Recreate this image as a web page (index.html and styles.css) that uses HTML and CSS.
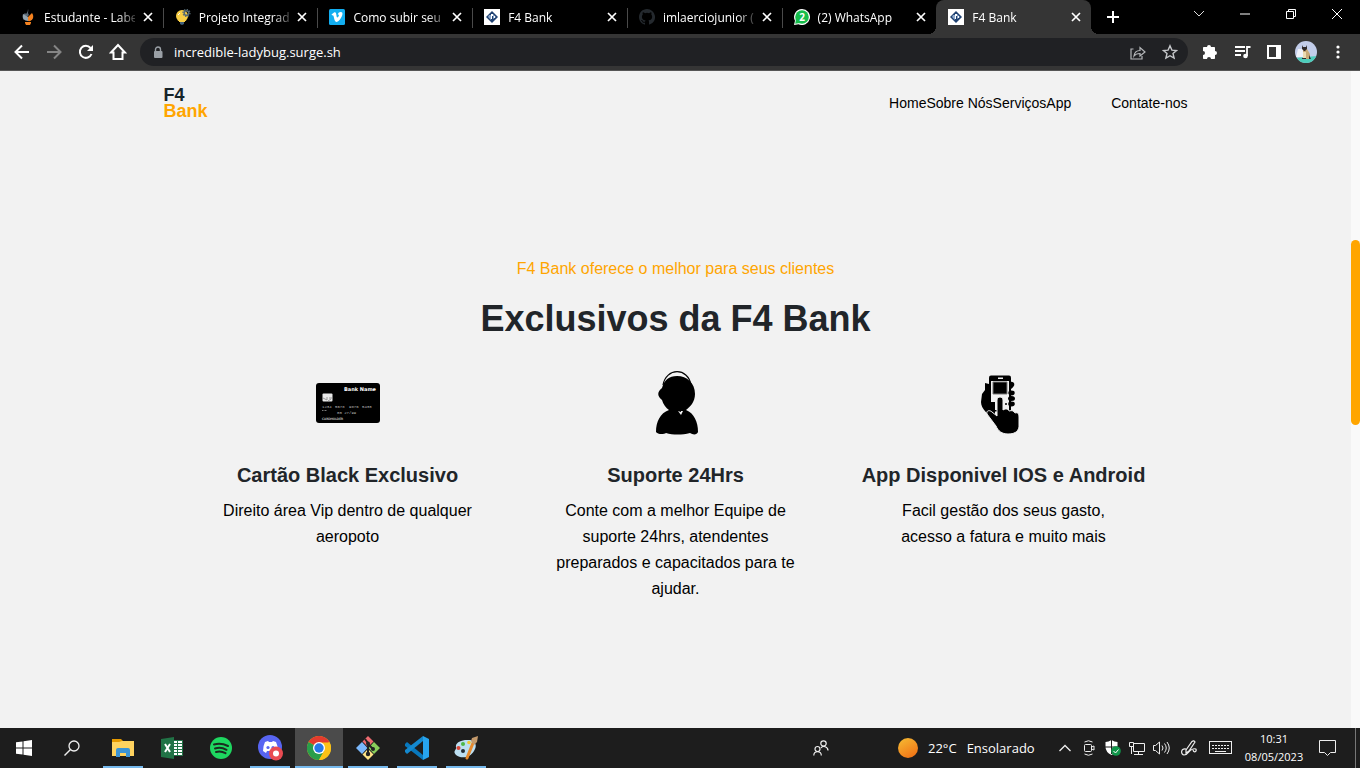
FILE: index.html
```html
<!DOCTYPE html>
<html lang="pt-BR">
<head>
<meta charset="utf-8">
<meta name="viewport" content="width=device-width, initial-scale=1">
<title>F4 Bank</title>
<link rel="stylesheet" href="styles.css">
</head>
<body>
<svg class="sprite" aria-hidden="true">
  <symbol id="x" viewBox="0 0 10 10"><path d="M1 1l8 8M9 1l-8 8" stroke="currentColor" stroke-width="1.7" fill="none"/></symbol>
  <symbol id="f4" viewBox="0 0 16 16"><path fill="#fff" d="M0 0h16v16H0z"/><path fill="#1f4171" d="M8 2l6 6-6 6-6-6z"/><path fill="#8da8ca" d="M5 6h2v5l-3-3zM9 5l3 3-3 2z"/><path fill="#fff" d="M7 5h2v2H8v3H7zM10 7h1v2h-1z"/></symbol>
</svg>

<div class="tabstrip">
  <div class="tabs">
    <div class="tab">
      <svg class="favicon" viewBox="0 0 16 16"><path fill="#5d6b78" d="M8 0c1 3-1 3 1 6L4 11C1 8 4 5 5 4l1 1C7 4 8 2 8 0z"/><path fill="#94a3ae" d="M3 5l5 3v4c-4 0-6-3-5-7z"/><path fill="#f5821f" d="M12 4c3 4 0 9-4 8V8z"/><path fill="#f5821f" d="M5 13h6v1l-1 2H6l-1-2z"/></svg>
      <a class="title" href="#">Estudante - Labenu</a><button class="close" aria-label="Fechar"><svg><use href="#x"/></svg></button>
    </div>
    <div class="tab">
      <svg class="favicon" viewBox="0 0 16 16"><circle cx="7" cy="7" r="6" fill="#f8ce45"/><path fill="#f8ce45" d="M4 11h6v2H4z"/><path fill="#43617b" d="M5 13h4v2l-2 1-2-1z"/><circle cx="11.500" cy="4" r="2.300" fill="none" stroke="#566b75" stroke-width="1.600"/><circle cx="11.500" cy="4" r="3.500" fill="none" stroke="#566b75" stroke-width="1.200" stroke-dasharray="1.400 1.300"/><path d="M3 6l2-2" stroke="#fff"/></svg>
      <a class="title" href="#">Projeto Integrador</a><button class="close" aria-label="Fechar"><svg><use href="#x"/></svg></button>
    </div>
    <div class="tab">
      <svg class="favicon" viewBox="0 0 16 16"><rect width="16" height="16" rx="1.5" fill="#12aef0"/><path fill="#fff" d="M2.500 5.600L5 3.600c1.500-.8 2 .2 2.300 2 .3 1.700.5 3 1 3 .6 0 1.600-1.700 1.600-2.400 0-.8-.6-.8-1.200-.6.6-2 1.800-2.700 3.200-2.600 1.400.1 1.800 1.200 1.500 2.500C12.800 8.500 9.500 13 7.500 13c-1.700 0-2-2-2.600-4.400C4.500 6.900 4.300 6 3.200 6.500z"/></svg>
      <a class="title" href="#">Como subir seu site</a><button class="close" aria-label="Fechar"><svg><use href="#x"/></svg></button>
    </div>
    <div class="tab">
      <svg class="favicon"><use href="#f4"/></svg>
      <a class="title" href="#">F4 Bank</a><button class="close" aria-label="Fechar"><svg><use href="#x"/></svg></button>
    </div>
    <div class="tab">
      <svg class="favicon" viewBox="0 0 16 16"><path fill="#24292e" d="M8 0C3.580 0 0 3.580 0 8c0 3.540 2.290 6.530 5.470 7.590.4.070.55-.17.55-.38v-1.490c-2.010.37-2.530-.49-2.690-.94-.09-.23-.48-.94-.82-1.130-.28-.15-.68-.52-.01-.53.63-.01 1.080.58 1.230.82.72 1.210 1.870.87 2.330.66.07-.52.28-.87.510-1.070-1.780-.2-3.640-.89-3.640-3.950 0-.87.31-1.590.82-2.150-.08-.2-.36-1.020.08-2.120 0 0 .67-.21 2.200.82a7.600 7.600 0 014 0c1.530-1.040 2.200-.82 2.200-.82.44 1.100.16 1.920.08 2.120.510.56.82 1.270.82 2.150 0 3.070-1.870 3.750-3.650 3.950.29.25.54.73.54 1.480v2.200c0 .21.15.46.55.38A8 8 0 008 0z"/></svg>
      <a class="title" href="#">imlaerciojunior (Laercio)</a><button class="close" aria-label="Fechar"><svg><use href="#x"/></svg></button>
    </div>
    <div class="tab">
      <svg class="favicon" viewBox="0 0 16 16"><path fill="#fff" d="M8 0a8 8 0 11-3.500 15.200L0 16l1-4.200A8 8 0 018 0z"/><circle cx="8" cy="8" r="6.800" fill="#16bd4b"/><path fill="#16bd4b" d="M2 10l-.8 4.800L6 14z"/><text x="8" y="12" text-anchor="middle" class="count">2</text></svg>
      <a class="title" href="#">(2) WhatsApp</a><button class="close" aria-label="Fechar"><svg><use href="#x"/></svg></button>
    </div>
    <div class="tab active">
      <svg class="favicon"><use href="#f4"/></svg>
      <a class="title" href="#" aria-current="page">F4 Bank</a><button class="close" aria-label="Fechar"><svg><use href="#x"/></svg></button>
    </div>
  </div>
  <button class="new-tab" aria-label="Nova guia"><svg width="12" height="12"><path d="M6 0v12M0 6h12" stroke="#fff" stroke-width="2"/></svg></button>
  <div class="window-buttons">
    <button aria-label="Pesquisar guias"><svg width="12" height="8"><path d="M1 1l5 5 5-5" stroke="#ddd" fill="none"/></svg></button>
    <button aria-label="Minimizar"><svg width="10" height="2"><path d="M0 1h10" stroke="#fff"/></svg></button>
    <button aria-label="Restaurar"><svg width="10" height="10"><path d="M.5 2.500h7v7h-7zM2.500 2.500v-2h7v7h-2" stroke="#fff" fill="none"/></svg></button>
    <button aria-label="Fechar janela"><svg width="10" height="10"><path d="M0 0l10 10M10 0L0 10" stroke="#fff"/></svg></button>
  </div>
</div>

<div class="toolbar">
  <button class="tool" aria-label="Voltar"><svg width="16" height="16"><path d="M15 8H2M8 1.500L1.500 8 8 14.500" stroke="#fff" stroke-width="2" fill="none"/></svg></button>
  <button class="tool" aria-label="Avançar"><svg width="16" height="16"><path d="M1 8h13M8 1.500L14.500 8 8 14.500" stroke="#858585" stroke-width="2" fill="none"/></svg></button>
  <button class="tool" aria-label="Recarregar"><svg width="16" height="16"><path d="M13.500 10A6 6 0 1 1 12.500 4" stroke="#fff" stroke-width="2" fill="none"/><path d="M15 1v6H9z" fill="#fff"/></svg></button>
  <button class="tool" aria-label="Início"><svg width="18" height="18"><path d="M2 9.500L9 2l7 7.500h-2.500V16h-9V9.500z" stroke="#fff" stroke-width="2" fill="none"/></svg></button>
  <div class="omnibox">
    <svg width="10" height="13"><path d="M2.500 6V3.500a2.500 2.500 0 015 0V6" stroke="#9aa0a6" stroke-width="1.400" fill="none"/><rect x="1" y="5" width="8.500" height="7" rx="1" fill="#9aa0a6"/></svg>
    <input type="text" aria-label="Endereço" value="incredible-ladybug.surge.sh">
    <button class="tool" aria-label="Compartilhar"><svg width="16" height="15"><path d="M3.500 4H1v10h11v-3M4 11c.5-4 3-5.500 6-5.500V2.500L15 7l-5 4V8.500C7.500 8.500 5.500 9 4 11z" stroke="#b5b7ba" stroke-width="1.200" fill="none"/></svg></button>
    <button class="tool" aria-label="Favoritar"><svg width="16" height="16"><path d="M8 1.800l1.900 4.300 4.600.4-3.500 3 1.100 4.600L8 11.700l-4.100 2.400L5 9.500l-3.500-3 4.600-.4z" stroke="#c5c7ca" stroke-width="1.400" fill="none"/></svg></button>
  </div>
  <button class="tool" aria-label="Extensões"><svg width="16" height="16"><path fill="#fff" d="M5 3a2 2 0 014 0h3c.6 0 1 .4 1 1v3a2 2 0 010 4v3c0 .6-.4 1-1 1H9a2 2 0 00-4 0H2c-.6 0-1-.4-1-1v-3a2 2 0 000-4V4c0-.6.4-1 1-1z"/></svg></button>
  <button class="tool" aria-label="Mídia"><svg width="17" height="14"><path d="M1 2h10M1 6h10M1 10h6M13 11V2h3.500" stroke="#fff" stroke-width="1.800" fill="none"/><circle cx="11.500" cy="11" r="2.300" fill="#fff"/></svg></button>
  <button class="tool" aria-label="Painel lateral"><svg width="14" height="14"><path fill="#fff" fill-rule="evenodd" d="M0 0h14v14H0zM2 2v10h7V2z"/></svg></button>
  <button class="tool" aria-label="Perfil"><svg width="22" height="22"><clipPath id="av"><circle cx="11" cy="11" r="11"/></clipPath><g clip-path="url(#av)"><path fill="#c2cdea" d="M0 0h22v22H0z"/><path fill="#eef1fa" d="M3 8h5v8H1z"/><path fill="#4dcdbb" d="M0 17l22-2v7H0z"/><path fill="#c7aa78" d="M8 8h4l3 5v5H8z"/><path fill="#eadab2" d="M8 11h3v6H8z"/><path fill="#302b2c" d="M7 4l1 2h3l1-2v4l-2 2H9L7 8zM7 17h4v1H7zM14 14l2 4h-2z"/></g></svg></button>
  <button class="tool" aria-label="Menu"><svg width="4" height="14"><circle cx="2" cy="2" r="1.600" fill="#fff"/><circle cx="2" cy="7" r="1.600" fill="#fff"/><circle cx="2" cy="12" r="1.600" fill="#fff"/></svg></button>
</div>

<div class="viewport">
  <div class="page">
    <header class="container header">
      <a class="logo" href="#">F4<span>Bank</span></a>
      <nav><a href="#">Home</a><a href="#">Sobre Nós</a><a href="#">Serviços</a><a href="#">App</a><a class="contact" href="#">Contate-nos</a></nav>
    </header>
    <main class="container exclusives">
      <p class="subtitle">F4 Bank oferece o melhor para seus clientes</p>
      <h2>Exclusivos da F4 Bank</h2>
      <div class="cards">
        <article>
          <svg width="64" height="64" role="img" aria-label="Cartão"><rect y="12" width="64" height="40" rx="3"/><text x="60" y="20" text-anchor="end" class="card-bank">Bank Name</text><rect x="6.500" y="22.500" width="10" height="8" rx="1" fill="#e9e9e9"/><path d="M7 27l4 2v-3M13 27h3M12 30l3-2" stroke="#999" fill="none"/><g class="card-print"><text x="6" y="37">1234</text><text x="19" y="37">5678</text><text x="33" y="37">9876</text><text x="46" y="37">5430</text><text x="21" y="43">00 27/99</text></g><path d="M6 39.500h5" stroke="#777" stroke-dasharray="1 .5"/><text x="6" y="49" class="card-holder">CARDHOLDER</text></svg>
          <h3>Cartão Black Exclusivo</h3>
          <p>Direito área Vip dentro de qualquer aeropoto</p>
        </article>
        <article>
          <svg width="64" height="64" viewBox="-3 0 64 64" role="img" aria-label="Atendente"><path d="M16 14C19-3.500 41-4 44 14" stroke="#000" stroke-width="1.200" fill="none"/><path d="M30 5C40 5 48 12 48 23c0 8-5 13-9 16 8 3 12 12 12 22-1 3-5 3-8 1-8 2-17 2-24 0-3 2-9 1-10-1 0-10 4-19 13-22-3-2-6-6-7-10-5-4-5-8 0-12C17 9 22 5 30 5z"/><path fill="#f2f2f2" d="M31 40l3 1v-1h2l-2 4z"/></svg>
          <h3>Suporte 24Hrs</h3>
          <p>Conte com a melhor Equipe de suporte 24hrs, atendentes preparados e capacitados para te ajudar.</p>
        </article>
        <article>
          <svg width="64" height="64" viewBox="2 0 64 64" role="img" aria-label="Celular na mão"><path d="M15 12l4 1v17l6 3v14c-7-3-14-9-14-16l1-8 3-4z"/><rect x="19" y="4.500" width="22" height="36" rx="2"/><path fill="#f2f2f2" d="M21 10h18v29H21z"/><path d="M23 11h14v12H23z" stroke="#777"/><path fill="#f2f2f2" d="M28 6.500h5v1.500h-5z"/><path d="M40 11c5-1 6 4 1 7z"/><ellipse cx="41.500" cy="22" rx="3.200" ry="2.400"/><ellipse cx="41.500" cy="27.500" rx="3.500" ry="2.500"/><ellipse cx="41.500" cy="33" rx="3.300" ry="2.400"/><circle cx="36" cy="33" r="1"/><path d="M21 31h4v9h-4z"/><path stroke="#f2f2f2" stroke-width="1" d="M27 45V29c0-4 6-4 6 0v10c3-2 5-1 6 1 3-1 5 0 6 2 3-1 4 1 4 4v10c-1 5-5 7-11 7-6 0-10-3-12-8l-9-12c-1-4 3-4 5-2z"/></svg>
          <h3>App Disponivel IOS e Android</h3>
          <p>Facil gestão dos seus gasto, acesso a fatura e muito mais</p>
        </article>
      </div>
    </main>
  </div>
  <div class="scrollbar"><div class="thumb"></div></div>
</div>

<footer class="taskbar">
  <button class="sys" aria-label="Iniciar"><svg width="16" height="16"><path fill="#fff" d="M0 2.300l6.500-.9v6.100H0zM7.500 1.200L16 0v7.500H7.500zM0 8.500h6.500v6.100L0 13.700zM7.500 8.500H16V16l-8.500-1.200z"/></svg></button>
  <button class="sys" aria-label="Pesquisar"><svg width="16" height="16"><circle cx="10" cy="6" r="5" stroke="#eee" stroke-width="1.300" fill="none"/><path d="M6.500 9.500L.5 15.500" stroke="#eee" stroke-width="1.400"/></svg></button>
  <div class="apps">
    <button class="app open" aria-label="Explorador"><svg width="22" height="20"><path fill="#e69a00" d="M0 1h9l2 2v4H0z"/><path fill="#ffd35f" d="M0 4h7l3-1h12v15H0z"/><path fill="#3c94d5" d="M4 19v-7q0-2 2-2h10q2 0 2 2v7h-4v-4H8v4z"/></svg></button>
    <button class="app" aria-label="Excel"><svg width="22" height="22"><path fill="#fff" stroke="#217346" d="M12 3.500h9.500v15H12z"/><path stroke="#217346" d="M12 6.500h9M12 9.500h9M12 12.500h9M12 15.500h9M16.500 4v14"/><path fill="#217346" d="M0 2l13-2v22L0 20z"/><path d="M4 7l5 8M9 7l-5 8" stroke="#fff" stroke-width="2"/></svg></button>
    <button class="app" aria-label="Spotify"><svg width="22" height="22"><circle cx="11" cy="11" r="11" fill="#1ed760"/><path d="M4 7.500q7-2 14 1.500M5 11.500q6-1.800 11.500 1.300M6 15q5-1.300 9.500 1.200" stroke="#1b2b20" stroke-width="2" stroke-linecap="round" fill="none"/></svg></button>
    <button class="app open" aria-label="Discord"><svg width="26" height="26"><circle cx="13" cy="12" r="12" fill="#5865f2"/><path fill="#fff" d="M8 7l3-1 1 1h3l1-1 3 1q2 4 2 9l-3 2-1-2h-7l-1 2-3-2Q6 11 8 7z"/><circle cx="11" cy="12.500" r="1.600" fill="#5865f2"/><circle cx="16" cy="12.500" r="1.600" fill="#5865f2"/><circle cx="19" cy="18.500" r="7" fill="#e94b52"/><circle cx="19" cy="18.500" r="3" fill="#fff"/></svg></button>
    <button class="app open current" aria-label="Chrome"><svg width="24" height="24"><circle cx="12" cy="12" r="12" fill="#fbc116"/><path fill="#e33b2e" d="M12 12L1.600 6A12 12 0 0122.400 6z"/><path fill="#299e4b" d="M12 12L1.600 6A12 12 0 0012 24l5.200-9z"/><path fill="#fbc116" d="M12 6.500h10.700A12 12 0 0112 24l5-9z"/><circle cx="12" cy="12" r="6" fill="#fff"/><circle cx="12" cy="12" r="4.700" fill="#2678e8"/></svg></button>
    <button class="app open" aria-label="Git Bash"><svg width="24" height="24"><path fill="#ef6b70" d="M12 0l5.500 5.500L12 11 6.500 5.500z"/><path fill="#7bb8fb" d="M6 6l5.500 6L6 18 0 12z"/><path fill="#8ace5b" d="M18 6l6 6-6 6-5.500-6z"/><path fill="#ffe486" d="M12 13l5.500 5.500L12 24l-5.500-5.500z"/><path d="M9 3l3 4v11M12 8l5 5" stroke="#222" stroke-width="2" fill="none"/><circle cx="12" cy="7.500" r="2" fill="#222"/><circle cx="12" cy="18" r="2.200" fill="#222"/><circle cx="17" cy="13" r="2" fill="#222"/></svg></button>
    <button class="app open" aria-label="VS Code"><svg width="24" height="24"><path fill="#0878bd" d="M0 8l2-2 16 13v5L0 10z"/><path fill="#1489cf" d="M0 16l2 2L18 5V0L0 14z"/><path fill="#27a4ee" d="M18 0l6 3v18l-6 3z"/></svg></button>
    <button class="app open" aria-label="Paint"><svg width="24" height="24"><path fill="#bcdff2" d="M13 4c8-1 11 5 7 11-4 7-13 8-18 4-4-4 1-5 0-8C1 7 7 4 13 4z"/><circle cx="9" cy="8" r="2" fill="#4db848"/><circle cx="15" cy="6.500" r="1.800" fill="#f0c834"/><circle cx="4.500" cy="12" r="2" fill="#d84536"/><circle cx="9" cy="15" r="2" fill="#222c35"/><path d="M19 7l-6 15" stroke="#e78a2d" stroke-width="3" stroke-linecap="round"/><path fill="#c49a6c" d="M17 5l1-3 6-2-1 6-3 3z"/></svg></button>
  </div>
  <div class="tray">
    <button class="wide" aria-label="Contatos"><svg width="16" height="16" fill="none" stroke="#eee" stroke-width="1.200"><circle cx="10.500" cy="3.500" r="2.700"/><circle cx="4.500" cy="9" r="2.500"/><path d="M.8 15.500c0-5 7.500-5 7.500 0M8 8c2-3 7-1 7 2.500"/></svg></button>
    <button class="weather"><span class="sun"></span><span>22°C</span><span>Ensolarado</span></button>
    <button aria-label="Ícones ocultos"><svg width="12" height="8"><path d="M.5 7L6 1.500 11.500 7" stroke="#eee" stroke-width="1.300" fill="none"/></svg></button>
    <button aria-label="Câmera"><svg width="12" height="16" fill="none" stroke="#eee"><rect x="1.500" y="4.500" width="7" height="7" rx="1"/><path d="M8.500 7l2.500-1v4L8.500 9M1.500 2q4-2.500 8 0M1.500 14q4 2.500 8 0"/></svg></button>
    <button aria-label="Segurança"><svg width="16" height="16"><path fill="#fff" d="M6.500 0q3 2 6 2v5q0 5-6 8-6-3-6-8V2q3 0 6-2z"/><path d="M6.500 0v14M0 7h13" stroke="#1d1d1d"/><circle cx="11" cy="11" r="4.800" fill="#10964a"/><path d="M8.500 11l2 2 3-3.500" stroke="#fff" fill="none"/></svg></button>
    <button aria-label="Rede"><svg width="16" height="15" fill="none" stroke="#eee"><path d="M5 2.500h10.500v8h-11V5M9.500 10.500v3M5 13.500h9M.5 1.500h4v4h-4zM2.500 6v7"/></svg></button>
    <button aria-label="Volume"><svg width="17" height="14" fill="none" stroke="#eee"><path d="M.5 4.500h2l4-3.500v12l-4-3.500h-2zM9 4.500q2 2.500 0 5M11.500 2.500q3.500 4.500 0 9M14 1q4.500 6 0 12"/></svg></button>
    <button class="wide" aria-label="Caneta"><svg width="17" height="16" fill="none" stroke="#eee" stroke-width="1.200"><path d="M5 10L11 1.500q2-1.500 3 .5L8 11l-3 2zM5 9C-1 8 0 15 3 15c5 0 4-5 9-6q4-1 3 2-2 2-3-1"/></svg></button>
    <button class="wide" aria-label="Teclado"><svg width="24" height="14"><rect x=".5" y=".5" width="22" height="12" fill="none" stroke="#eee"/><path d="M3 4.500h18M3 7.500h18" stroke="#eee" stroke-dasharray="2 1"/><path d="M6 10.500h11" stroke="#eee"/></svg></button>
    <button class="clock"><time>10:31</time><time>08/05/2023</time></button>
    <button class="wide" aria-label="Notificações"><svg width="17" height="16"><path d="M.5.5h16v12h-5l-3 3-3-3h-5z" stroke="#eee" fill="none"/></svg></button>
    <span class="desktop-edge"></span>
  </div>
</footer>
</body>
</html>
```
FILE: styles.css
```css
* { box-sizing: border-box; margin: 0; padding: 0; }
body { display: flex; flex-direction: column; height: 100vh; overflow: hidden; font-family: "Liberation Sans", Arial, sans-serif; background: #f2f2f2; }
a { color: inherit; text-decoration: none; }
button { display: flex; align-items: center; justify-content: center; flex: none; border: 0; background: none; color: #fff; font: inherit; }
svg { flex: none; }
.sprite { position: absolute; width: 0; height: 0; }

/* Browser chrome */
.tabstrip, .toolbar, .taskbar { display: flex; flex: none; font-family: "Open Sans", "Noto Sans", sans-serif; color: #fff; }
.tabstrip { height: 34px; background: #000; }
.tabs { display: flex; width: 1083px; min-width: 0; margin-left: 8px; }
.tab { position: relative; display: flex; flex: 1; align-items: center; min-width: 0; padding: 0 10px 0 12px; font-size: 12px; }
.tab::after { content: ""; position: absolute; right: -1px; top: 8px; width: 1px; height: 20px; background: #4a4a4a; }
.tab:nth-last-child(2)::after { display: none; }
.favicon { width: 16px; height: 16px; margin-right: 8px; }
.count { font: bold 10px "Open Sans", sans-serif; fill: #fff; }
.title { flex: 1; overflow: hidden; white-space: nowrap; mask-image: linear-gradient(to right, #000 74px, transparent 96px); }
.tab .close { width: 10px; height: 10px; margin-left: 8px; }
.close svg { width: 10px; height: 10px; }
.tab.active { border-radius: 8px 8px 0 0; background: #353535; }
.tab.active::before, .tab.active::after { content: ""; position: absolute; top: auto; bottom: 0; width: 8px; height: 8px; }
.tab.active::before { left: -8px; background: radial-gradient(circle at 0 0, transparent 8px, #353535 8px); }
.tab.active::after { right: -8px; background: radial-gradient(circle at 100% 0, transparent 8px, #353535 8px); }
.new-tab { width: 28px; margin-left: 8px; }
.window-buttons { display: flex; height: 28px; margin-left: auto; }
.window-buttons button { width: 46px; }
.toolbar { align-items: center; height: 37px; padding: 0 6px; background: #353535; border-bottom: 1px solid #565656; }
.tool { width: 32px; height: 28px; }
.omnibox { display: flex; flex: 1; align-items: center; height: 28px; margin: 0 6px; padding: 0 2px 0 13px; border-radius: 14px; background: #202124; }
.omnibox input { flex: 1; min-width: 0; margin-left: 11px; border: 0; outline: 0; background: none; color: #fff; font: 13px "Open Sans", "Noto Sans", sans-serif; }

/* Site */
.viewport { display: flex; flex: 1; min-height: 0; }
.page { flex: 1; min-width: 0; overflow: hidden; background: #f2f2f2; }
.scrollbar { width: 9px; padding-top: 169px; background: #f9f9f9; }
.thumb { height: 185px; border-radius: 5px; background: #ffa500; }
.container { width: 100%; max-width: 1024px; margin: 0 auto; }
.header { display: flex; align-items: center; justify-content: space-between; height: 64px; }
.logo { font-size: 18px; line-height: 16px; font-weight: bold; color: #16242a; }
.logo span { display: block; color: #ffa500; }
nav { display: flex; font-size: 14px; color: #000; }
.contact { margin-left: 40px; }
.exclusives { padding: 121px 40px 0; text-align: center; line-height: 26px; color: #000; }
.subtitle { color: #ffa500; }
h2 { margin-top: 15px; font-size: 36px; line-height: 44px; color: #212529; }
.cards { display: grid; grid-template-columns: repeat(3, 1fr); gap: 40px; margin-top: 30px; }
article svg { display: block; margin: 0 auto 27px; }
article h3 { margin-bottom: 10px; font-size: 20px; color: #212529; }
article p { max-width: 252px; margin: 0 auto; }
.card-bank { font: bold 5px "DejaVu Sans", sans-serif; fill: #fff; }
.card-print { font: 4px "Liberation Mono", monospace; fill: #bbb; }
.card-holder { font: 3px "DejaVu Sans", sans-serif; fill: #fff; }

/* Taskbar */
.taskbar { height: 40px; background: #1d1d1d; }
.sys { width: 48px; }
.apps { display: flex; gap: 1px; margin-left: 3px; }
.app { position: relative; width: 48px; }
.app.open::after { content: ""; position: absolute; bottom: 0; left: 4px; right: 4px; height: 2px; background: #76b9ed; }
.app.current { background: #4b4b4b; }
.app.current::after { left: 0; right: 0; }
.tray { display: flex; margin-left: auto; }
.tray button { width: 24px; }
.tray .wide { width: 32px; }
.tray .weather { justify-content: flex-start; gap: 10px; width: 155px; margin-left: 61px; font-size: 13px; white-space: nowrap; }
.sun { width: 20px; height: 20px; border-radius: 50%; background: linear-gradient(150deg, #f5bd34, #f06a12); }
.tray .clock { flex-direction: column; width: 74px; font-size: 11px; line-height: 18px; }
.desktop-edge { width: 5px; margin-left: 12px; border-left: 1px solid #777; }
```
